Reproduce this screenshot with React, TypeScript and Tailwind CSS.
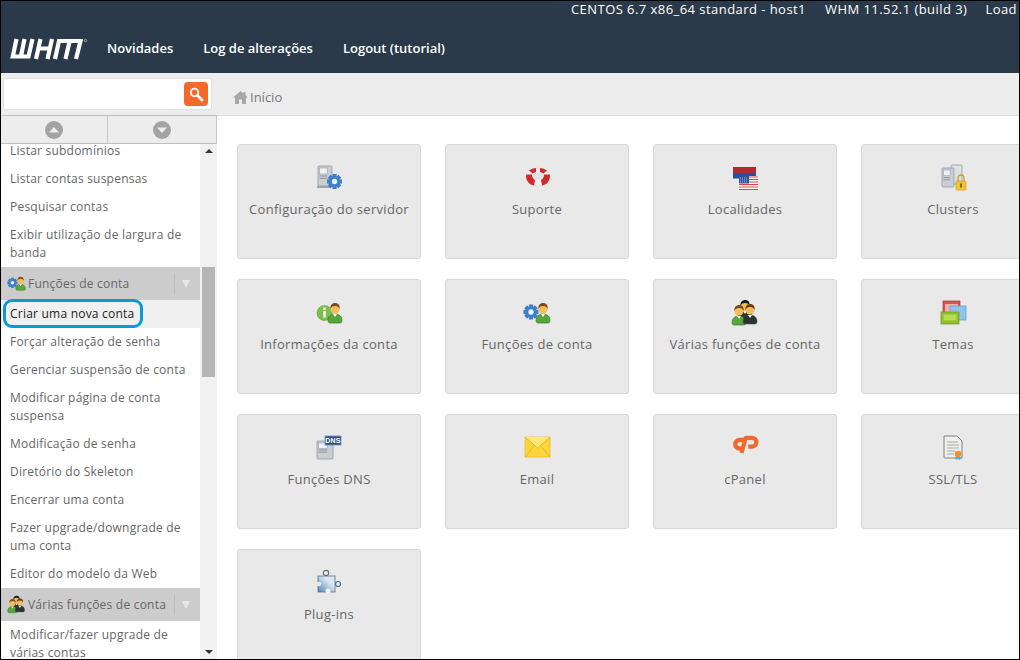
import type { ReactNode } from 'react'

function Person({ x = 0, y = 0, shirt = '#5aa63a', hair = '#7a4a1e' }: { x?: number; y?: number; shirt?: string; hair?: string }) {
  return (
    <g transform={`translate(${x} ${y})`}>
      <path d="M0 19c0-5 3-7 7-7s7 2 7 7c0 1-1 2-2 2H2c-1 0-2-1-2-2z" fill={shirt} stroke="#2f6d1f" strokeWidth="0.6" />
      <path d="M5 12l2 3 2-3z" fill="#fff" />
      <circle cx="7" cy="7" r="4.6" fill="#f3bd5c" />
      <path d="M2.4 7c-.4-4 2-6 4.8-6s5 2 4.4 6c-1-2-2-3-4.6-3S3.400 5 2.400 7z" fill={hair} />
    </g>
  )
}

function Gear({ cx, cy, r, color = '#3f7fc8' }: { cx: number; cy: number; r: number; color?: string }) {
  const teeth = [0, 45, 90, 135]
  return (
    <g>
      {teeth.map(a => (
        <rect key={a} x={cx - r * 0.28} y={cy - r} width={r * 0.56} height={r * 2} fill={color} transform={`rotate(${a} ${cx} ${cy})`} />
      ))}
      <circle cx={cx} cy={cy} r={r * 0.74} fill={color} />
      <circle cx={cx} cy={cy} r={r * 0.36} fill="#e9f1fa" />
    </g>
  )
}

function ServerBox({ x, y, w, h }: { x: number; y: number; w: number; h: number }) {
  return (
    <g>
      <rect x={x} y={y} width={w} height={h} rx="1" fill="#c9ced3" stroke="#8b929a" strokeWidth="0.7" />
      <rect x={x + 1.500} y={y + 2} width={w * 0.55} height={h * 0.3} fill="#eef1f3" stroke="#8f979e" strokeWidth="0.5" />
      <path d={`M${x + 1.5} ${y + h * 0.5}h${w * 0.55}M${x + 1.5} ${y + h * 0.62}h${w * 0.55}`} stroke="#7f878f" strokeWidth="0.8" />
    </g>
  )
}

function Icon({ size = 28, children }: { size?: number; children: ReactNode }) {
  return (
    <svg width={size} height={size} viewBox="0 0 28 28" className="shrink-0">
      {children}
    </svg>
  )
}

const ServerConfigIcon = () => (
  <Icon>
    <ServerBox x={3} y={2} w={14} h={20} />
    <path d="M2 22h14v2H2z" fill="#9aa4ad" />
    <Gear cx={19.500} cy={17.500} r={7.500} />
  </Icon>
)

const LifebuoyIcon = () => (
  <Icon>
    <ellipse cx="15" cy="13" rx="12" ry="9" fill="#f4f2f2" stroke="#d5d2d2" strokeWidth="0.5" />
    <path d="M6 6.500Q9 4 13 4V8Q11 8.500 9.500 9.500zM24 6.500Q21 4 17 4V8Q19 8.500 20.500 9.500z" fill="#cf2a2a" />
    <path d="M3.300 10.500H9Q9 14 12 16L11 21.500Q4 20 3 13zM26.700 10.500H21Q21 14 18 16L19 21.500Q26 20 27 13z" fill="#cf2a2a" />
    <ellipse cx="15" cy="12" rx="4.500" ry="3" fill="#e4e2e2" stroke="#bbb" strokeWidth="0.4" />
  </Icon>
)

const FlagIcon = () => (
  <Icon>
    <rect x="2" y="3" width="23" height="6" fill="#b3282e" />
    <rect x="2" y="9" width="23" height="5.500" fill="#2e4d9e" />
    <rect x="8" y="12" width="19" height="14" fill="#fff" />
    <path d="M8 13h19M8 15.500h19M8 18h19M8 20.500h19M8 23h19M8 25.500h19" stroke="#d9444a" strokeWidth="1.200" />
    <rect x="8" y="12" width="10" height="7.500" fill="#2f4f9c" />
    <path d="M9 14h8M9 16h8M9 18h8" stroke="#c9d4ee" strokeWidth="0.8" strokeDasharray="1 1" />
  </Icon>
)

const ClustersIcon = () => (
  <Icon>
    <rect x="12" y="1" width="11" height="19" rx="1" fill="#dfe2e5" stroke="#8b929a" strokeWidth="0.7" />
    <ServerBox x={3} y={4} w={12} h={19} />
    <path d="M19 17v-3a3 3 0 0 1 6 0v3" fill="none" stroke="#c9a227" strokeWidth="1.300" />
    <rect x="17" y="17" width="10" height="9" rx="1" fill="#f1c232" stroke="#c9981e" strokeWidth="0.6" />
    <rect x="21" y="19.500" width="2" height="4" fill="#8a6a10" />
  </Icon>
)

const InfoPersonIcon = () => (
  <Icon>
    <circle cx="9.500" cy="14" r="7.500" fill="#7cc04a" stroke="#5a9c33" strokeWidth="0.6" />
    <path d="M8.300 12h2.400v6.500H8.300zM8.300 8.500h2.400v2.300H8.300z" fill="#fff" />
    <Person x={13} y={3} />
  </Icon>
)

const GearPersonIcon = ({ size = 28 }: { size?: number }) => (
  <Icon size={size}>
    <Gear cx={8} cy={13} r={7.500} />
    <Person x={13} y={3} />
  </Icon>
)

const GroupIcon = ({ size = 28 }: { size?: number }) => (
  <Icon size={size}>
    <Person x={7} y={0} shirt="#2d3138" hair="#1a1a1a" />
    <Person x={1} y={5} />
    <Person x={12} y={4} shirt="#2d3138" hair="#6b3d16" />
  </Icon>
)

const ThemesIcon = () => (
  <Icon>
    <rect x="4" y="2" width="17" height="15" fill="#d9534f" stroke="#b03a36" strokeWidth="0.7" />
    <rect x="6" y="5" width="13" height="9" fill="#f2b0ac" />
    <rect x="11" y="7" width="16" height="14" fill="#8fc3ee" stroke="#5f9bd0" strokeWidth="0.7" />
    <rect x="2" y="13" width="18" height="12" fill="#8fbf2f" stroke="#6a9420" strokeWidth="0.7" />
    <rect x="4.500" y="15.500" width="13" height="6" fill="#b9dc4f" />
  </Icon>
)

const DnsIcon = () => (
  <Icon>
    <ServerBox x={2} y={7} w={16} h={18} />
    <rect x="10" y="2" width="16" height="9" fill="#34507f" stroke="#6a8fc8" strokeWidth="0.8" />
    <text x="18" y="9.200" textAnchor="middle" fontSize="7" fontWeight="700" fill="#fff" fontFamily="'Liberation Sans', sans-serif">DNS</text>
  </Icon>
)

const EmailIcon = () => (
  <Icon>
    <rect x="2" y="3" width="25" height="20" fill="#fbd63a" stroke="#e2b321" strokeWidth="0.6" />
    <path d="M2 3l12.500 11L27 3" fill="#ffe877" />
    <path d="M2 23l9-11M27 23l-9-11M2 3l12.500 11L27 3" fill="none" stroke="#e0ae22" strokeWidth="0.8" />
  </Icon>
)

const CpanelIcon = () => (
  <Icon>
    <path d="M14 6H8.500a4.200 4.200 0 0 0 0 8.500H11" fill="none" stroke="#ef6a33" strokeWidth="4.400" />
    <path d="M10.500 19L14.800 3.800H21a4.300 4.300 0 0 1 0 8.800h-3.800" fill="none" stroke="#ef6a33" strokeWidth="4.200" strokeLinejoin="round" />
  </Icon>
)

const CertIcon = () => (
  <Icon>
    <path d="M5 2h13l5 5v17H6a1 1 0 0 1-1-1z" fill="#eeeeea" stroke="#777" strokeWidth="0.9" />
    <path d="M8 8h11M8 11h12M8 14h12M8 17h8M8 20h7" stroke="#a9a9a5" strokeWidth="1" />
    <path d="M16 23l1 3 2-1 2 1 1-3z" fill="#5aa9e0" />
    <circle cx="19" cy="20" r="3.300" fill="#e8952b" />
  </Icon>
)

const PuzzleIcon = () => (
  <Icon>
    <defs>
      <linearGradient id="puzzle" x1="0" y1="1" x2="1" y2="0">
        <stop offset="0" stopColor="#4f86bd" />
        <stop offset="0.65" stopColor="#dbe7f1" />
      </linearGradient>
    </defs>
    <circle cx="11" cy="4" r="2.700" fill="none" stroke="#5b6f86" strokeWidth="1.200" />
    <circle cx="23" cy="15" r="2.500" fill="none" stroke="#5b6f86" strokeWidth="1.200" />
    <rect x="3" y="7" width="17" height="16" fill="url(#puzzle)" stroke="#5b6f86" strokeWidth="0.8" />
    <circle cx="13" cy="22" r="2.500" fill="#f4f4f4" />
    <circle cx="4" cy="15" r="2.300" fill="#e9e9e9" />
  </Icon>
)

function WhmLogo() {
  return (
    <svg width="78" height="22" viewBox="0 0 78 22">
      <g fill="none" stroke="#fff" strokeWidth="4.200">
        <path d="M6.500 1L2.800 18.500H18.500L22.500 1M14.500 1L11 18" />
        <path d="M30.500 1L26 21M42 1L37.500 21M28 10.500H40" />
        <path d="M45 21L49 3H70.500L66 21M59.700 3L55.500 21" />
      </g>
      <circle cx="75.500" cy="2.500" r="1.200" fill="none" stroke="#fff" strokeWidth="0.500" />
    </svg>
  )
}

function CircleArrow({ up }: { up?: boolean }) {
  return (
    <svg width="18" height="18" viewBox="0 0 18 18">
      <circle cx="9" cy="9" r="9" fill="#a3a3a3" />
      <path d={up ? 'M4 11.500L9 6l5 5.500z' : 'M4 6.500L9 12l5-5.500z'} fill="#ededed" />
    </svg>
  )
}

const topItems = ['Listar subdomínios', 'Listar contas suspensas', 'Pesquisar contas', 'Exibir utilização de largura de banda']
const accountItems = [
  'Forçar alteração de senha',
  'Gerenciar suspensão de conta',
  'Modificar página de conta suspensa',
  'Modificação de senha',
  'Diretório do Skeleton',
  'Encerrar uma conta',
  'Fazer upgrade/downgrade de uma conta',
  'Editor do modelo da Web',
]

const cards = [
  { label: 'Configuração do servidor', icon: <ServerConfigIcon /> },
  { label: 'Suporte', icon: <LifebuoyIcon /> },
  { label: 'Localidades', icon: <FlagIcon /> },
  { label: 'Clusters', icon: <ClustersIcon /> },
  { label: 'Informações da conta', icon: <InfoPersonIcon /> },
  { label: 'Funções de conta', icon: <GearPersonIcon /> },
  { label: 'Várias funções de conta', icon: <GroupIcon /> },
  { label: 'Temas', icon: <ThemesIcon /> },
  { label: 'Funções DNS', icon: <DnsIcon /> },
  { label: 'Email', icon: <EmailIcon /> },
  { label: 'cPanel', icon: <CpanelIcon /> },
  { label: 'SSL/TLS', icon: <CertIcon /> },
  { label: 'Plug-ins', icon: <PuzzleIcon /> },
]

function NavItem({ label }: { label: string }) {
  return <div className="px-[9px] pr-[10px] py-[5px] text-[12px] leading-[18px] tracking-[0.22px] text-[#666]">{label}</div>
}

function NavHeader({ label, icon }: { label: string; icon: ReactNode }) {
  return (
    <div className="flex h-[33px] items-center bg-[#cccccc] pl-[6px] text-[12px] tracking-[0.22px] text-[#666]">
      <div className="mr-[3px] flex w-[18px] justify-center">{icon}</div>
      <span className="flex-1 truncate">{label}</span>
      <div className="flex h-[20px] w-[26px] items-center justify-start border-l border-[#bdbdbd] pl-[7px]">
        <svg width="8" height="8" viewBox="0 0 8 8">
          <path d="M0 0h8L4 8z" fill="#e6e6e6" />
        </svg>
      </div>
    </div>
  )
}

export default function App() {
  return (
    <div className="flex h-[660px] w-[1020px] flex-col overflow-hidden border border-black bg-white font-['Open_Sans',sans-serif]">
      {/* Header */}
      <header className="h-[72px] shrink-0 bg-[#2a3a4a] text-white">
        <div className="flex h-[17px] items-center justify-end gap-[18px] pr-[2px] text-[13px] tracking-[0.45px] whitespace-nowrap">
          <span className="mr-[1px]">CENTOS 6.7 x86_64 standard - host1</span>
          <span>WHM 11.52.1 (build 3)</span>
          <span>Load</span>
        </div>
        <div className="mt-[20px] flex h-[22px] items-center pl-[9px] text-[13px] font-semibold whitespace-nowrap">
          <WhmLogo />
          <div className="ml-[19px] flex gap-[30px]">
            <span>Novidades</span>
            <span>Log de alterações</span>
            <span>Logout (tutorial)</span>
          </div>
        </div>
      </header>

      <div className="flex min-h-0 flex-1">
        {/* Sidebar */}
        <aside className="flex w-[216px] shrink-0 flex-col">
          <div className="flex h-[42px] shrink-0 items-center bg-[#ededed] pl-[2px]">
            <div className="flex h-[32px] w-[209px] items-center justify-end rounded-[3px] border border-[#e0e0e0] bg-white pr-[3px]">
              <div className="flex h-[24px] w-[24px] items-center justify-center rounded-[4px] bg-[#f26a2b]">
                <svg width="15" height="15" viewBox="0 0 15 15" fill="none" stroke="#fff">
                  <circle cx="5.500" cy="5.500" r="3.800" strokeWidth="1.800" />
                  <path d="M8.500 8.500L13 13" strokeWidth="2.800" strokeLinecap="round" />
                </svg>
              </div>
            </div>
          </div>
          <div className="flex h-[29px] shrink-0 border-y border-[#bfbfbf] bg-[#ededed]">
            <div className="flex w-[107px] items-center justify-center border-r border-[#c8c8c8]">
              <CircleArrow up />
            </div>
            <div className="flex flex-1 items-center justify-center border-r border-[#c8c8c8]">
              <CircleArrow />
            </div>
          </div>
          <div className="flex min-h-0 flex-1">
            <div className="min-w-0 flex-1 overflow-hidden">
              <div className="mt-[-7px]">
                {topItems.map(item => (
                  <NavItem key={item} label={item} />
                ))}
                <NavHeader label="Funções de conta" icon={<GearPersonIcon size={19} />} />
                <div className="relative bg-[#f0f0f0] px-[9px] py-[5px] text-[12px] leading-[18px] tracking-[0.22px] text-[#222]">
                  Criar uma nova conta
                  <div className="absolute top-[-1px] left-[2px] h-[29px] w-[140px] rounded-[9px] border-[3px] border-[#0a9ad5]" />
                </div>
                {accountItems.map(item => (
                  <NavItem key={item} label={item} />
                ))}
                <NavHeader label="Várias funções de conta" icon={<GroupIcon size={19} />} />
                <NavItem label="Modificar/fazer upgrade de várias contas" />
              </div>
            </div>
            {/* Scrollbar */}
            <div className="flex w-[17px] shrink-0 flex-col items-center justify-between bg-[#f1f1f1] py-[5px]">
              <svg width="8" height="4" viewBox="0 0 8 4">
                <path d="M0 4L4 0l4 4z" fill="#333" />
              </svg>
              <svg width="8" height="4" viewBox="0 0 8 4">
                <path d="M0 0l4 4 4-4z" fill="#333" />
              </svg>
            </div>
            <div className="w-0">
              <div className="relative top-[123px] left-[-15px] h-[110px] w-[13px] bg-[#b5b5b5]" />
            </div>
          </div>
        </aside>

        {/* Main */}
        <main className="flex min-w-0 flex-1 flex-col">
          <div className="flex h-[43px] shrink-0 items-center border-b border-[#d9d9d9] bg-[#ededed] pt-[7px] pl-[16px] text-[13px] text-[#777]">
            <svg width="15" height="13" viewBox="0 0 15 13" className="mr-[2px]">
              <path d="M7.500 0L0 6.500h2V13h4V8.500h3V13h4V6.500h2l-2.500-2.300V1h-2v1.400z" fill="#a8a8a8" />
            </svg>
            Início
          </div>
          <div className="min-h-0 flex-1 overflow-hidden pt-[28px] pl-[20px]">
            <div className="grid w-max grid-cols-[repeat(4,184px)] gap-x-[24px] gap-y-[20px]">
              {cards.map(card => (
                <div key={card.label} className="flex h-[115px] flex-col items-center rounded-[3px] border border-[#d6d6d6] bg-[#e9e9e9] pt-[19px] text-[13px] tracking-[0.3px] text-[#666]">
                  {card.icon}
                  <div className="mt-[8px] leading-[18px] whitespace-nowrap">{card.label}</div>
                </div>
              ))}
            </div>
          </div>
        </main>
      </div>
    </div>
  )
}
